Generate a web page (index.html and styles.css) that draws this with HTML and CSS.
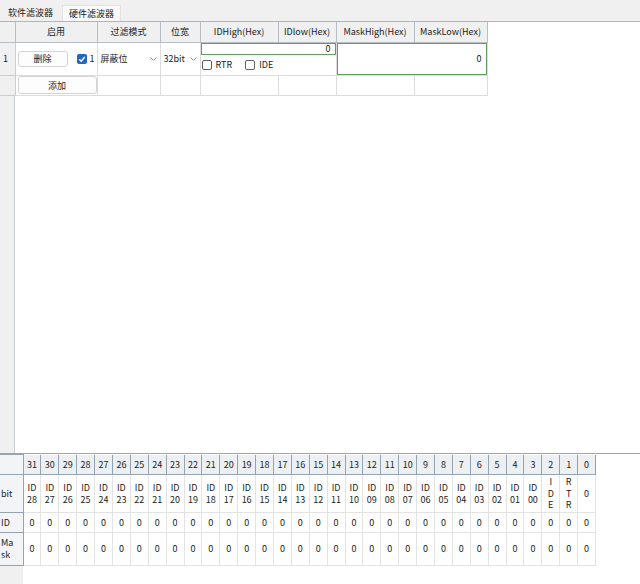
FILE: index.html
```html
<!DOCTYPE html>
<html lang="zh-CN">
<head>
<meta charset="utf-8">
<title>滤波器</title>
<link rel="stylesheet" href="styles.css">
</head>
<body>
<div class="tabs">
  <span class="tab">软件滤波器</span>
  <span class="tab active">硬件滤波器</span>
</div>
<div class="top">
  <table class="dgv">
    <colgroup>
      <col class="c-rh"><col class="c-en"><col class="c-mode"><col class="c-w">
      <col class="c-idh"><col class="c-idl"><col class="c-mh"><col class="c-ml">
    </colgroup>
    <thead>
      <tr>
        <th class="corner"></th><th>启用</th><th>过滤模式</th><th>位宽</th>
        <th>IDHigh(Hex)</th><th>IDlow(Hex)</th><th>MaskHigh(Hex)</th><th>MaskLow(Hex)</th>
      </tr>
    </thead>
    <tbody>
      <tr class="r1">
        <td class="rh">1</td>
        <td class="en">
          <div class="en-wrap">
            <span class="btn del">删除</span>
            <span class="cb on"><svg viewBox="0 0 10 10" width="10" height="10"><polyline points="2.2,5.2 4.2,7.2 7.8,3" fill="none" stroke="#fff" stroke-width="1.4"/></svg></span>
            <span class="cbl">1</span>
          </div>
        </td>
        <td class="sel"><div class="sel-wrap"><span>屏蔽位</span><svg class="chev" viewBox="0 0 7 4" width="7" height="4"><polyline points="0.5,0.5 3.5,3.5 6.5,0.5" fill="none" stroke="#8a8a8a" stroke-width="0.9"/></svg></div></td>
        <td class="sel"><div class="sel-wrap"><span>32bit</span><svg class="chev" viewBox="0 0 7 4" width="7" height="4"><polyline points="0.5,0.5 3.5,3.5 6.5,0.5" fill="none" stroke="#8a8a8a" stroke-width="0.9"/></svg></div></td>
        <td colspan="2" class="idcell">
          <div class="idin">0</div>
          <div class="flags">
            <span class="cb"></span><span class="flbl">RTR</span>
            <span class="cb ide"></span><span class="flbl">IDE</span>
          </div>
        </td>
        <td colspan="2" class="maskcell"><div class="maskin">0</div></td>
      </tr>
      <tr class="r2">
        <td class="rh"></td>
        <td class="en"><span class="btn add">添加</span></td>
        <td></td><td></td><td></td><td></td><td></td><td></td>
      </tr>
    </tbody>
  </table>
</div>
<div class="bot">
  <table class="bits">
    <colgroup><col class="b-rh"></colgroup>
    <tr class="bh">
      <th class="brh"></th>
      <th>31</th><th>30</th><th>29</th><th>28</th><th>27</th><th>26</th><th>25</th><th>24</th>
      <th>23</th><th>22</th><th>21</th><th>20</th><th>19</th><th>18</th><th>17</th><th>16</th>
      <th>15</th><th>14</th><th>13</th><th>12</th><th>11</th><th>10</th><th>9</th><th>8</th>
      <th>7</th><th>6</th><th>5</th><th>4</th><th>3</th><th>2</th><th>1</th><th>0</th>
    </tr>
    <tr class="bbit">
      <td class="brh">bit</td>
      <td>ID<br>28</td><td>ID<br>27</td><td>ID<br>26</td><td>ID<br>25</td><td>ID<br>24</td><td>ID<br>23</td><td>ID<br>22</td><td>ID<br>21</td>
      <td>ID<br>20</td><td>ID<br>19</td><td>ID<br>18</td><td>ID<br>17</td><td>ID<br>16</td><td>ID<br>15</td><td>ID<br>14</td><td>ID<br>13</td>
      <td>ID<br>12</td><td>ID<br>11</td><td>ID<br>10</td><td>ID<br>09</td><td>ID<br>08</td><td>ID<br>07</td><td>ID<br>06</td><td>ID<br>05</td>
      <td>ID<br>04</td><td>ID<br>03</td><td>ID<br>02</td><td>ID<br>01</td><td>ID<br>00</td><td class="vert">I<br>D<br>E</td><td class="vert">R<br>T<br>R</td><td>0</td>
    </tr>
    <tr class="bid">
      <td class="brh">ID</td>
      <td>0</td><td>0</td><td>0</td><td>0</td><td>0</td><td>0</td><td>0</td><td>0</td>
      <td>0</td><td>0</td><td>0</td><td>0</td><td>0</td><td>0</td><td>0</td><td>0</td>
      <td>0</td><td>0</td><td>0</td><td>0</td><td>0</td><td>0</td><td>0</td><td>0</td>
      <td>0</td><td>0</td><td>0</td><td>0</td><td>0</td><td>0</td><td>0</td><td>0</td>
    </tr>
    <tr class="bmask">
      <td class="brh">Ma<br>sk</td>
      <td>0</td><td>0</td><td>0</td><td>0</td><td>0</td><td>0</td><td>0</td><td>0</td>
      <td>0</td><td>0</td><td>0</td><td>0</td><td>0</td><td>0</td><td>0</td><td>0</td>
      <td>0</td><td>0</td><td>0</td><td>0</td><td>0</td><td>0</td><td>0</td><td>0</td>
      <td>0</td><td>0</td><td>0</td><td>0</td><td>0</td><td>0</td><td>0</td><td>0</td>
    </tr>
  </table>
</div>
</body>
</html>
```
FILE: styles.css
```css
* { box-sizing: border-box; }

body {
  margin: 0;
  width: 640px;
  height: 584px;
  overflow: hidden;
  display: flex;
  flex-direction: column;
  font-family: "Noto Sans CJK SC", "Noto Sans", sans-serif;
  font-size: 9px;
  color: #222;
  background: #fff;
}

/* tabs */
.tabs {
  flex: 0 0 22px;
  display: flex;
  align-items: flex-end;
  padding-left: 2px;
  background: #f0f0f0;
  border-bottom: 1px solid #b4b4b4;
}
.tab {
  height: 16px;
  line-height: 15px;
  padding: 0 6px;
  margin-right: 3px;
}
.tab.active {
  background: #f9f9f9;
  border: 1px solid #e2e2e2;
  border-bottom: none;
}

/* top grid */
.top {
  flex: 0 0 431px;
  background: linear-gradient(to right, #f0f0f0 0 14px, #c9ced4 14px 15px, #fff 15px);
}
.dgv {
  border-collapse: collapse;
  table-layout: fixed;
  width: 487px;
}
.c-rh { width: 15px; }
.c-en { width: 82px; }
.c-mode { width: 63px; }
.c-w { width: 40px; }
.c-idh { width: 78px; }
.c-idl { width: 58px; }
.c-mh { width: 78px; }
.c-ml { width: 73px; }

.dgv th {
  height: 20px;
  padding: 0;
  font-weight: normal;
  background: #f0f0f0;
  border: 1px solid #b7bec6;
  border-top: none;
  text-align: center;
}
.dgv th.corner { border-left: none; }
.dgv td {
  padding: 0;
  border: 1px solid #dcdcdc;
  vertical-align: middle;
}
.dgv td.rh {
  background: #f0f0f0;
  border-left: none;
  border-color: #c9ced4;
  padding-left: 3px;
}
.r1 { height: 33px; }
.r2 { height: 20px; }

.en-wrap {
  display: flex;
  align-items: center;
  padding-left: 2px;
}
.btn {
  display: inline-flex;
  align-items: center;
  justify-content: center;
  background: #fdfdfd;
  border: 1px solid #d4d4d4;
  border-radius: 3px;
}
.btn.del { width: 50px; height: 16px; }
.btn.add { width: 79px; height: 18px; margin-left: 2px; }

.cb {
  display: inline-flex;
  width: 10px;
  height: 10px;
  border: 1px solid #5f5f5f;
  border-radius: 2px;
  background: #fff;
}
.cb.on {
  margin-left: 9px;
  border: none;
  background: #1f68c4;
}
.cbl { margin-left: 3px; }

.sel-wrap {
  display: flex;
  align-items: center;
  justify-content: space-between;
  padding: 0 3px 0 3px;
}
.chev { margin-top: 1px; }

.idcell { vertical-align: top; }
.idin {
  height: 12px;
  border: 1px solid #5ea15e;
  text-align: right;
  line-height: 10px;
  padding-right: 4px;
}
.flags {
  display: flex;
  align-items: center;
  height: 20px;
  padding-left: 1px;
}
.flbl { margin-left: 4px; }
.cb.ide { margin-left: 13px; }

.maskcell { vertical-align: top; }
.maskin {
  height: 32px;
  border: 1px solid #5ea15e;
  display: flex;
  align-items: center;
  justify-content: flex-end;
  padding-right: 4px;
}

/* bottom bit grid */
.bot {
  flex: 1 1 auto;
  border-top: 1px solid #a3a3a3;
  background: linear-gradient(to right, #f0f0f0 0 23px, #fff 23px);
}
.bits {
  border-collapse: collapse;
  table-layout: fixed;
  width: 596px;
  background: #fff;
}
.b-rh { width: 23px; }
.bits th {
  height: 20px;
  padding: 0;
  font-weight: normal;
  background: #edf0f3;
  border: 1px solid #95a2b0;
  border-top: none;
  text-align: center;
}
.bits td {
  padding: 0;
  text-align: center;
  border: 1px solid #e3e3e3;
  line-height: 12px;
}
.bits th.brh, .bits td.brh {
  background: #f3f4f6;
  border: 1px solid #95a2b0;
  border-left: none;
  text-align: left;
  padding-left: 1px;
}
.bits td.vert { line-height: 11.5px; }
.bbit { height: 38px; }
.bid { height: 20px; }
.bmask { height: 33px; }
```
